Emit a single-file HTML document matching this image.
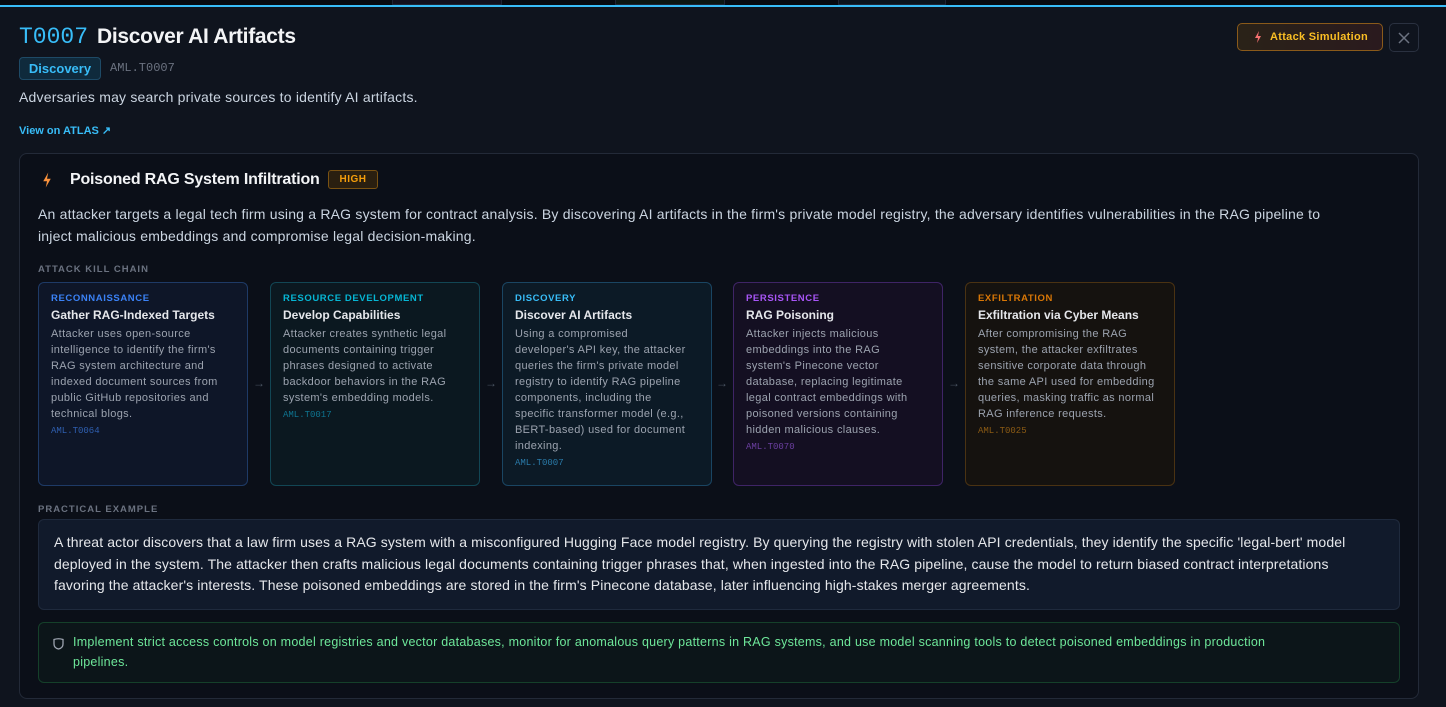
<!DOCTYPE html>
<html><head><meta charset="utf-8"><style>
*{box-sizing:border-box;margin:0;padding:0}
body{width:1446px;height:707px;overflow:hidden;background:#0f141e;font-family:"Liberation Sans",sans-serif;color:#e5e7eb;position:relative}
.top{position:absolute;left:0;top:0;width:1446px;height:5px;background:#070a10}
.top i{position:absolute;top:0;height:5px;border:1px solid #1f2433;border-top:none}
.line{position:absolute;left:0;top:5px;width:1446px;height:2px;background:#38bdf8}
.mono{font-family:"Liberation Mono",monospace}
h1{position:absolute;left:19px;top:24px;font-size:21px;font-weight:bold;color:#f3f4f6;letter-spacing:-0.3px}
h1 span{color:#38bdf8;font-family:"Liberation Mono",monospace;font-weight:normal;font-size:23px;margin-right:9px;letter-spacing:0}
.tag{position:absolute;left:19px;top:57px;width:82px;height:23px;border:1px solid #1e4a66;background:#0f2a3c;border-radius:4px;color:#38bdf8;font-size:13px;font-weight:bold;text-align:center;line-height:21px}
.aml{position:absolute;left:110px;top:61px;font-size:12px;color:#6b7280}
.desc{position:absolute;left:19px;top:89px;font-size:14px;color:#cbd5e1;letter-spacing:0.2px}
.view{position:absolute;left:19px;top:124px;font-size:11px;font-weight:bold;color:#38bdf8}
.btn{position:absolute;left:1237px;top:23px;width:146px;height:28px;border:1px solid #8a5a1a;border-radius:5px;background:linear-gradient(90deg,#2a2218,#2a1a1e);color:#fbbf24;font-size:11px;font-weight:bold;line-height:26px;padding-left:32px;letter-spacing:0.3px}
.btn svg{position:absolute;left:16px;top:7px}
.close{position:absolute;left:1389px;top:23px;width:30px;height:29px;border:1px solid #2a3140;border-radius:5px}
.close svg{position:absolute;left:8px;top:8px}
.card{position:absolute;left:19px;top:153px;width:1400px;height:546px;border:1px solid #232a38;border-radius:8px;background:#0b0f18}
.ct{position:absolute;left:70px;top:171px;font-size:16px;font-weight:bold;color:#f3f4f6;letter-spacing:-0.2px}
.bolt{position:absolute;left:42px;top:172px}
.high{position:absolute;left:328px;top:170px;width:50px;height:19px;border:1px solid #7a5212;background:#2a1f10;border-radius:3px;color:#f59e0b;font-size:10px;font-weight:bold;text-align:center;line-height:17px;letter-spacing:0.5px}
.p1{position:absolute;left:38px;top:203px;width:1315px;font-size:14px;line-height:22px;color:#cbd5e1;letter-spacing:0.2px}
.lbl{position:absolute;left:38px;font-size:9.5px;font-weight:bold;letter-spacing:1px;color:#6b7280}
.k{position:absolute;top:282px;width:210px;height:204px;border:1px solid;border-radius:6px;padding:10px 12px}
.k .t{font-size:9.5px;font-weight:bold;letter-spacing:0.6px}
.k .h{font-size:12px;font-weight:bold;color:#e5e7eb;margin-top:4px}
.k .d{font-size:11px;line-height:16px;color:#9ca3af;margin-top:4px;letter-spacing:0.35px;width:180px}
.k .c{font-family:"Liberation Mono",monospace;font-size:9px;margin-top:4px}
.ar{position:absolute;top:376px;color:#4b5563;font-size:12px}
.ex{position:absolute;left:38px;top:519px;width:1362px;height:91px;border:1px solid #1f2a3d;border-radius:6px;background:#111a2b;padding:12px 40px 12px 15px;font-size:14px;line-height:21.5px;color:#e5e7eb;letter-spacing:0.12px}
.mit{position:absolute;left:38px;top:622px;width:1362px;height:61px;border:1px solid #15402a;border-radius:6px;background:#0c1519;padding:9px 88px 0 34px;font-size:12.5px;line-height:20px;color:#6ee79a;letter-spacing:0.25px}
.mit svg{position:absolute;left:14px;top:15px}
</style></head><body>
<div class="top"><i style="left:392px;width:110px;background:#120f1c"></i><i style="left:615px;width:110px;background:#0c1612"></i><i style="left:838px;width:108px;background:#0b131c"></i></div>
<div class="line"></div>
<h1><span>T0007</span>Discover AI Artifacts</h1>
<div class="tag">Discovery</div>
<div class="aml mono">AML.T0007</div>
<div class="desc">Adversaries may search private sources to identify AI artifacts.</div>
<div class="view">View on ATLAS ↗</div>
<div class="btn"><svg width="8" height="12" viewBox="0 0 8 12"><path d="M5 0 L1 7 H4 L3 12 L7 5 H4 Z" fill="#f87171"/></svg>Attack Simulation</div>
<div class="close"><svg width="12" height="12" viewBox="0 0 12 12"><path d="M1 1L11 11M11 1L1 11" stroke="#6b7280" stroke-width="1.5"/></svg></div>
<div class="card"></div>
<svg class="bolt" width="10" height="16" viewBox="0 0 8 12"><path d="M5 0 L1 7 H4 L3 12 L7 5 H4 Z" fill="#fb923c"/></svg>
<div class="ct">Poisoned RAG System Infiltration</div>
<div class="high">HIGH</div>
<div class="p1">An attacker targets a legal tech firm using a RAG system for contract analysis. By discovering AI artifacts in the firm's private model registry, the adversary identifies vulnerabilities in the RAG pipeline to inject malicious embeddings and compromise legal decision-making.</div>
<div class="lbl" style="top:264px">ATTACK KILL CHAIN</div>
<div class="k" style="left:38px;border-color:#1e3a66;background:#0e1628"><div class="t" style="color:#3b82f6">RECONNAISSANCE</div><div class="h">Gather RAG-Indexed Targets</div><div class="d">Attacker uses open-source intelligence to identify the firm's RAG system architecture and indexed document sources from public GitHub repositories and technical blogs.</div><div class="c" style="color:#2f5fb0">AML.T0064</div></div>
<div class="ar" style="left:253px">→</div>
<div class="k" style="left:270px;border-color:#124654;background:#0b1820"><div class="t" style="color:#06b6d4">RESOURCE DEVELOPMENT</div><div class="h">Develop Capabilities</div><div class="d">Attacker creates synthetic legal documents containing trigger phrases designed to activate backdoor behaviors in the RAG system's embedding models.</div><div class="c" style="color:#0e7490">AML.T0017</div></div>
<div class="ar" style="left:485px">→</div>
<div class="k" style="left:502px;border-color:#1a4562;background:#0c1a26"><div class="t" style="color:#38bdf8">DISCOVERY</div><div class="h">Discover AI Artifacts</div><div class="d" style="width:172px">Using a compromised developer's API key, the attacker queries the firm's private model registry to identify RAG pipeline components, including the specific transformer model (e.g., BERT-based) used for document indexing.</div><div class="c" style="color:#2a7aa8">AML.T0007</div></div>
<div class="ar" style="left:716px">→</div>
<div class="k" style="left:733px;border-color:#3f2466;background:#140f22"><div class="t" style="color:#a855f7">PERSISTENCE</div><div class="h">RAG Poisoning</div><div class="d">Attacker injects malicious embeddings into the RAG system's Pinecone vector database, replacing legitimate legal contract embeddings with poisoned versions containing hidden malicious clauses.</div><div class="c" style="color:#6b3fa0">AML.T0070</div></div>
<div class="ar" style="left:948px">→</div>
<div class="k" style="left:965px;border-color:#4a3212;background:#15120f"><div class="t" style="color:#d97706">EXFILTRATION</div><div class="h">Exfiltration via Cyber Means</div><div class="d">After compromising the RAG system, the attacker exfiltrates sensitive corporate data through the same API used for embedding queries, masking traffic as normal RAG inference requests.</div><div class="c" style="color:#8a5a14">AML.T0025</div></div>
<div class="lbl" style="top:504px">PRACTICAL EXAMPLE</div>
<div class="ex">A threat actor discovers that a law firm uses a RAG system with a misconfigured Hugging Face model registry. By querying the registry with stolen API credentials, they identify the specific 'legal-bert' model deployed in the system. The attacker then crafts malicious legal documents containing trigger phrases that, when ingested into the RAG pipeline, cause the model to return biased contract interpretations favoring the attacker's interests. These poisoned embeddings are stored in the firm's Pinecone database, later influencing high-stakes merger agreements.</div>
<div class="mit"><svg width="11" height="12" viewBox="0 0 11 12"><path d="M1 1.5 Q5.5 0 10 1.5 V6 Q10 10 5.5 11 Q1 10 1 6Z" fill="none" stroke="#9ca3af" stroke-width="1.3"/></svg>Implement strict access controls on model registries and vector databases, monitor for anomalous query patterns in RAG systems, and use model scanning tools to detect poisoned embeddings in production pipelines.</div>
</body></html>
